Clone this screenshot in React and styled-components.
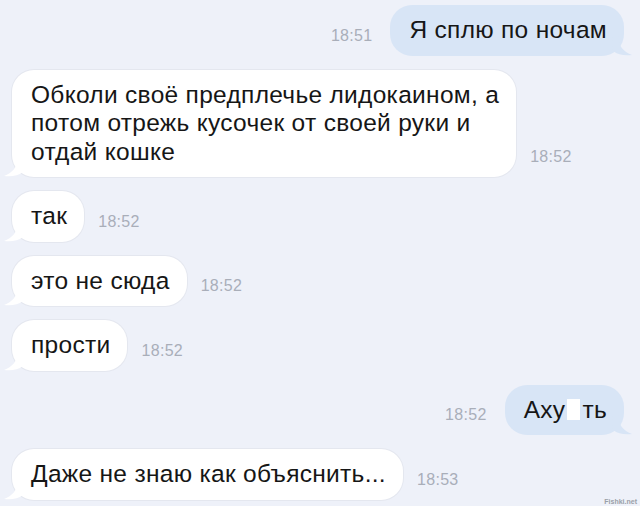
import React from "react";
import styled, { createGlobalStyle } from "styled-components";

const GlobalStyle = createGlobalStyle`
  html, body {
    margin: 0;
    padding: 0;
    background: #eef1f9;
  }
  body {
    font-family: "Liberation Sans", Arial, sans-serif;
  }
`;

const messages = [
  { out: true, time: "18:51", lines: ["Я сплю по ночам"] },
  {
    out: false,
    time: "18:52",
    lines: [
      "Обколи своё предплечье лидокаином, а",
      "потом отрежь кусочек от своей руки и",
      "отдай кошке",
    ],
  },
  { out: false, time: "18:52", lines: ["так"] },
  { out: false, time: "18:52", lines: ["это не сюда"] },
  { out: false, time: "18:52", lines: ["прости"] },
  { out: true, time: "18:52", censored: true },
  { out: false, time: "18:53", lines: ["Даже не знаю как объяснить..."] },
];

const Tail = ({ out }) => (
  <TailSvg out={out} width="20" height="20" viewBox="0 0 20 20">
    {out ? (
      <path d="M6 0 C6 10 12 16 20 19 C13 20 6 19 1 15 L0 0 Z" />
    ) : (
      <path d="M14 0 C14 10 8 16 0 19 C7 20 14 19 19 15 L20 0 Z" />
    )}
  </TailSvg>
);

const Message = ({ msg }) => (
  <Row out={msg.out}>
    <Bubble out={msg.out}>
      <Tail out={msg.out} />
      <Text>
        {msg.censored ? (
          <>
            Аху<Blot />ть
          </>
        ) : (
          msg.lines.map((l, i) => (
            <React.Fragment key={i}>
              {i > 0 && <br />}
              {l}
            </React.Fragment>
          ))
        )}
      </Text>
    </Bubble>
    <Time>{msg.time}</Time>
  </Row>
);

export default function App() {
  return (
    <>
      <GlobalStyle />
      <Screen>
        <Chat>
          {messages.map((m, i) => (
            <Message key={i} msg={m} />
          ))}
        </Chat>
        <Watermark>Fishki.net</Watermark>
      </Screen>
    </>
  );
}

const Screen = styled.div`
  position: relative;
  width: 640px;
  height: 506px;
  overflow: hidden;
  background: #eef1f9;
`;

const Chat = styled.div`
  display: flex;
  flex-direction: column;
  gap: 14px;
  padding: 5px 16px 0 12px;
`;

const Row = styled.div`
  display: flex;
  flex-direction: ${(p) => (p.out ? "row-reverse" : "row")};
  align-items: flex-end;
  gap: ${(p) => (p.out ? "18px" : "14px")};
`;

const Bubble = styled.div`
  position: relative;
  background: ${(p) => (p.out ? "#d8e5f6" : "#ffffff")};
  border-radius: 22px;
  padding: 11px 17px 11px 19px;
  box-shadow: ${(p) => (p.out ? "none" : "0 0 0 1px #e4e7ef")};
`;

const TailSvg = styled.svg`
  position: absolute;
  bottom: 0;
  ${(p) => (p.out ? "right: -8px;" : "left: -8px;")}
  fill: ${(p) => (p.out ? "#d8e5f6" : "#ffffff")};
`;

const Text = styled.div`
  position: relative;
  font-size: 24.5px;
  letter-spacing: 0.3px;
  line-height: 28.5px;
  color: #161616;
  white-space: nowrap;
`;

const Blot = styled.span`
  display: inline-block;
  width: 13px;
  height: 21px;
  margin: 0 2px;
  background: #ffffff;
  vertical-align: -2px;
`;

const Time = styled.div`
  font-size: 16px;
  letter-spacing: 0.3px;
  color: #a9aeb9;
  margin-bottom: 11px;
`;

const Watermark = styled.div`
  position: absolute;
  right: 3px;
  bottom: 1px;
  font-size: 7px;
  font-weight: bold;
  color: #9aa0a8;
`;
